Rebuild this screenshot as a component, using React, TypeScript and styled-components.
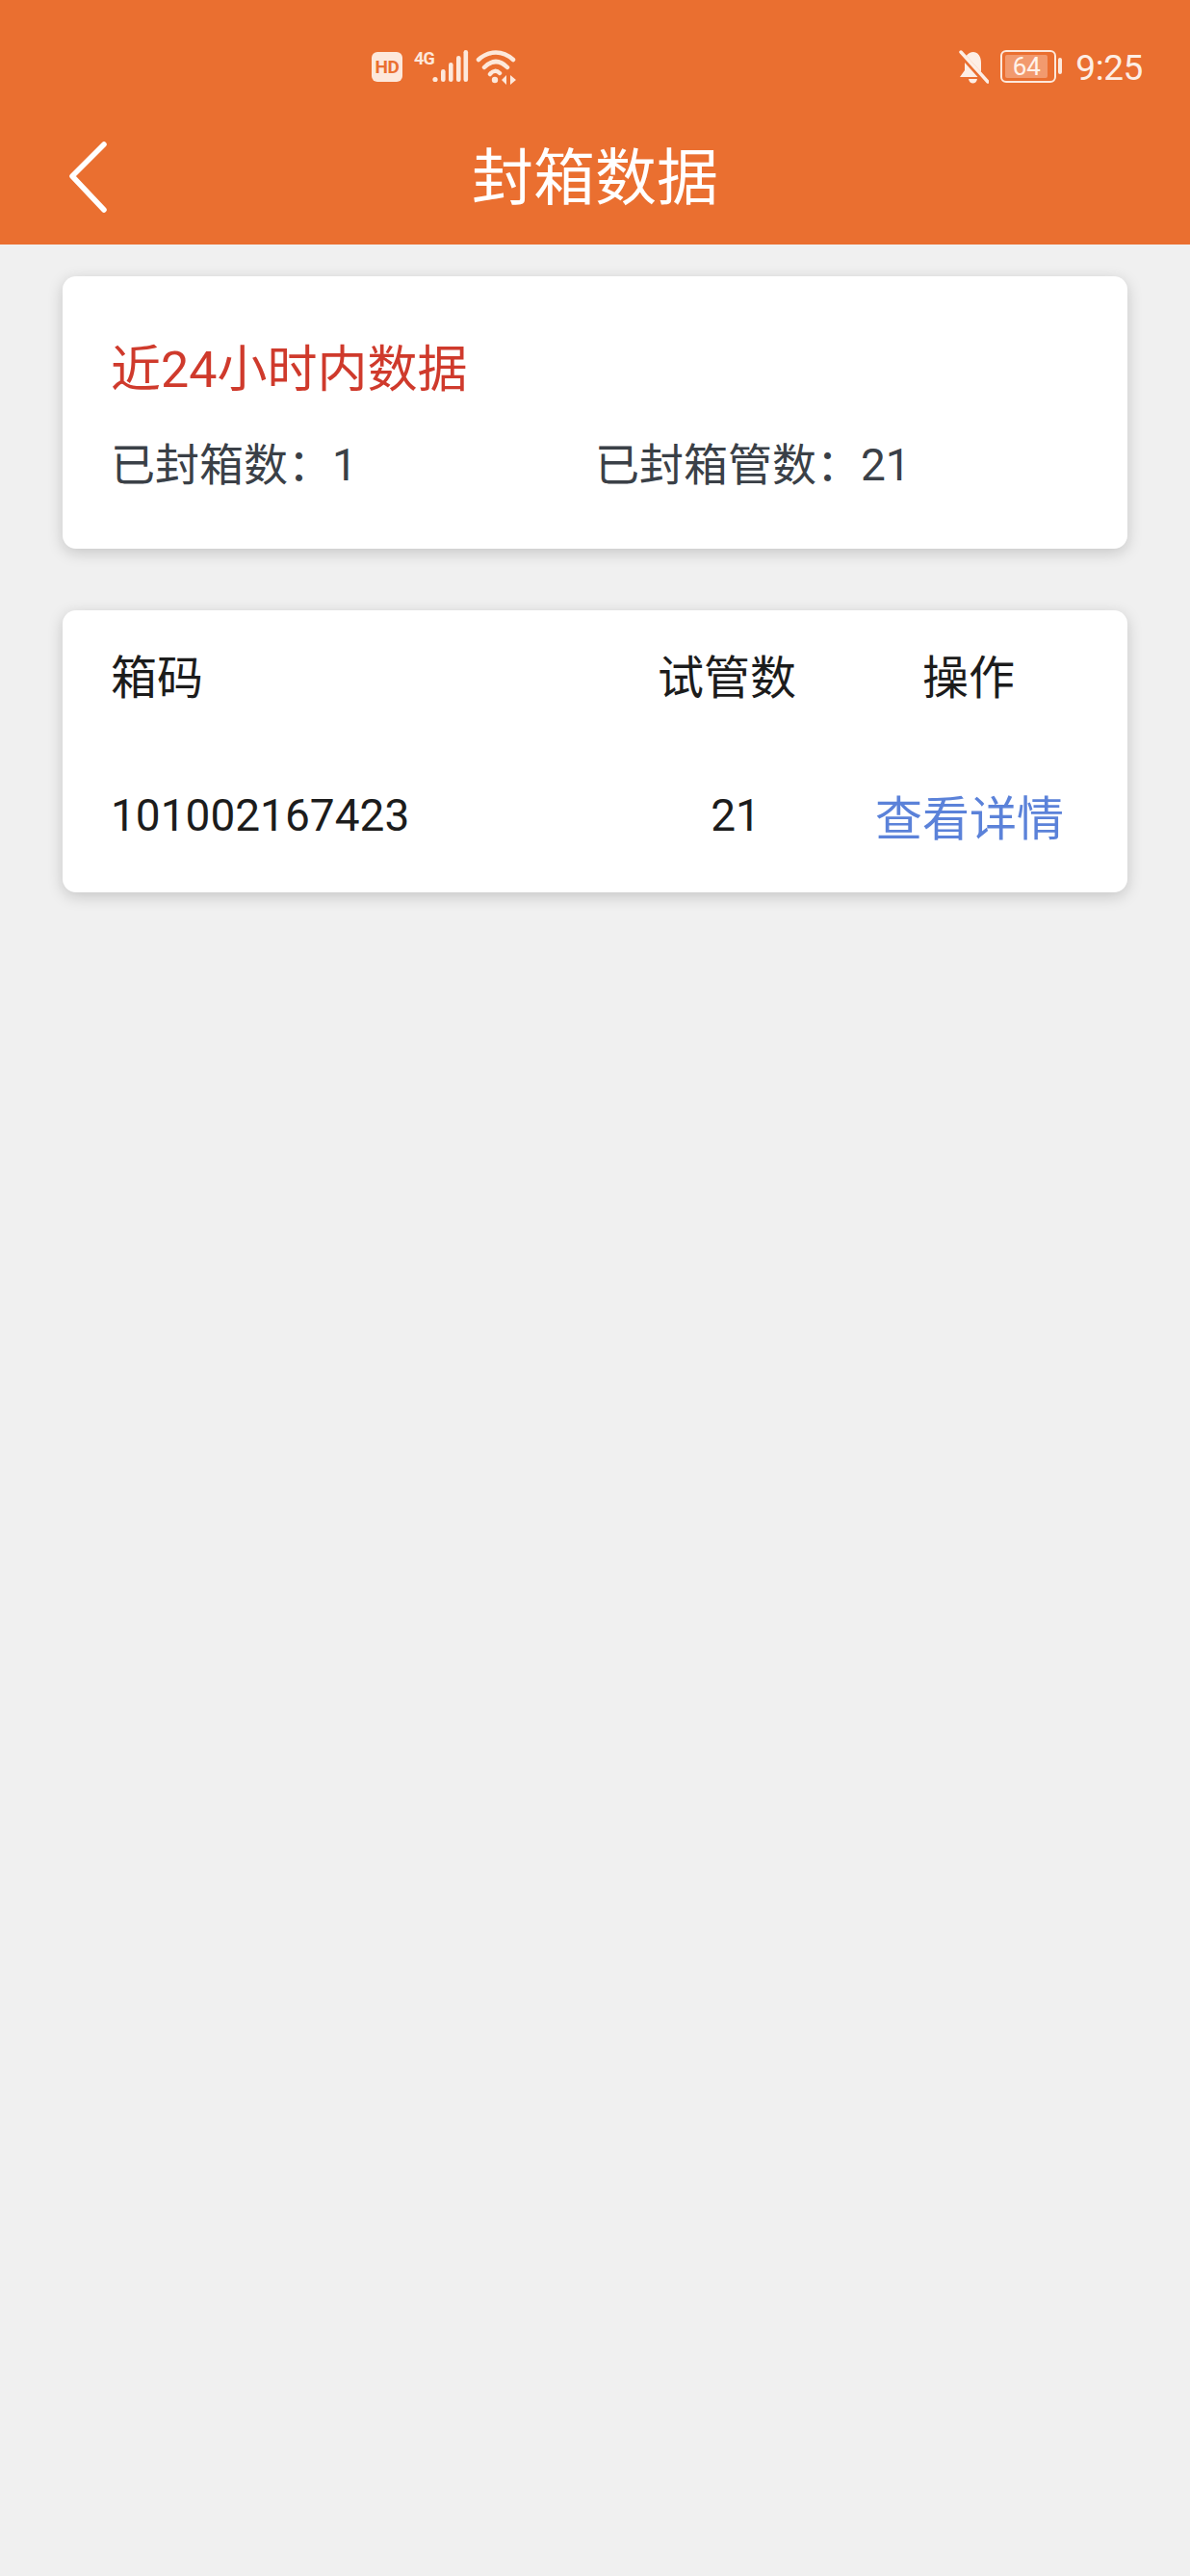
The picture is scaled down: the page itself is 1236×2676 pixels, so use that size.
import React from 'react'
import styled, { createGlobalStyle } from 'styled-components'

const GlobalStyle = createGlobalStyle`
  html, body {
    margin: 0;
    padding: 0;
    background: #f0f0f0;
  }
  * {
    box-sizing: border-box;
  }
`

const Page = styled.div`
  width: 1236px;
  height: 2676px;
  overflow: hidden;
  background: #f0f0f0;
  font-family: Roboto, "Noto Sans CJK SC", sans-serif;
`

const Header = styled.header`
  height: 254px;
  background: #ea6f30;
  color: #fff;
`

const StatusBar = styled.div`
  height: 116px;
  padding: 52px 49px 0 386px;
  display: flex;
  align-items: flex-start;
  justify-content: space-between;
  color: #fde8db;
`

const StatusGroup = styled.div`
  display: flex;
  align-items: flex-start;
`

const HdBadge = styled.div`
  width: 32px;
  height: 31px;
  margin-top: 2px;
  border-radius: 6px;
  background: #fde8db;
  color: #ea6f30;
  font-size: 19px;
  font-weight: 700;
  line-height: 31px;
  text-align: center;
  letter-spacing: -0.5px;
`

const NetworkLabel = styled.div`
  width: 19px;
  margin-left: 12px;
  font-size: 18px;
  font-weight: 700;
  line-height: 18px;
  letter-spacing: -0.8px;
`

const Battery = styled.div`
  width: 58px;
  height: 34px;
  margin-left: 12px;
  padding: 3px;
  border: 2px solid #fde8db;
  border-radius: 6px;
`

const BatteryFill = styled.div`
  width: 44px;
  height: 24px;
  background: #f29a6e;
  border-radius: 2px;
  font-size: 26px;
  line-height: 24px;
  text-align: center;
  color: #fff3ea;
`

const BatteryNub = styled.div`
  width: 4px;
  height: 17px;
  margin: 8px 0 0 2px;
  border-radius: 2px;
  background: #fde8db;
`

const Clock = styled.div`
  margin-left: 14px;
  font-size: 37px;
  line-height: 38px;
  letter-spacing: -0.4px;
  color: #fdeee5;
`

const Toolbar = styled.div`
  height: 138px;
  padding-left: 72px;
  display: flex;
  align-items: center;
  position: relative;
`

const BackIcon = styled.svg`
  width: 40px;
  height: 74px;
  margin-top: -2px;
`

const Title = styled.h1`
  position: absolute;
  left: 0;
  right: 0;
  top: 26px;
  margin: 0;
  font-size: 64px;
  font-weight: 400;
  line-height: 88px;
  text-align: center;
  color: #fff;
`

const Content = styled.main`
  padding: 33px 65px 0;
  display: flex;
  flex-direction: column;
  gap: 64px;
`

const Card = styled.section`
  background: #fff;
  border-radius: 14px;
  box-shadow: 0 4px 16px rgba(0, 0, 0, 0.18);
`

const SummaryCard = styled(Card)`
  height: 283px;
  padding: 67px 50px 0;
`

const SummaryTitle = styled.h2`
  margin: 0;
  font-size: 52px;
  font-weight: 400;
  line-height: 62px;
  color: #cf3a2c;
`

const SummaryRow = styled.div`
  margin-top: 37px;
  display: grid;
  grid-template-columns: 503px 1fr;
  font-size: 46px;
  line-height: 60px;
  color: #3a4047;
`

const TableRow = styled.div<{ $height: number }>`
  height: ${({ $height }) => $height}px;
  padding: 0 19px 0 50px;
  display: grid;
  grid-template-columns: 535px 212px 290px;
  align-items: center;
  font-size: 48px;
  color: #1c1c1c;
`

const CenterCell = styled.div`
  padding-right: 2px;
  text-align: center;
`

const CodeCell = styled.div`
  font-size: 46px;
`

const CountCell = styled.div`
  padding-left: 16px;
  font-size: 46px;
  text-align: center;
`

const DetailLink = styled.a`
  text-align: center;
  color: #5b82d9;
  font-size: 49px;
`

const App = () => (
  <Page>
    <GlobalStyle />
    <Header>
      <StatusBar>
        <StatusGroup>
          <HdBadge>HD</HdBadge>
          <NetworkLabel>4G</NetworkLabel>
          <svg width="38" height="36" viewBox="0 0 38 36" fill="#fde8db">
            <circle cx="3" cy="30.5" r="2.6" />
            <rect x="9" y="20" width="4.6" height="13" rx="2.3" />
            <rect x="17" y="13" width="4.6" height="20" rx="2.3" />
            <rect x="25" y="6" width="4.6" height="27" rx="2.3" />
            <rect x="32.5" y="0" width="4.6" height="33" rx="2.3" />
          </svg>
          <svg width="44" height="36" viewBox="0 0 44 36" fill="none" stroke="#fde8db" strokeWidth="4.5" strokeLinecap="round" style={{ marginLeft: 7 }}>
            <path d="M3 10 C14 0 28 0 39 10" />
            <path d="M9 18 C17 10 25 10 33 18" />
            <path d="M15 25 C18 21 22 21 25 24" />
            <circle cx="20" cy="31" r="3.2" fill="#fde8db" stroke="none" />
            <path d="M32 26 L27 31 L32 36 Z M36 26 L42 31 L36 36 Z" fill="#fde8db" stroke="none" />
          </svg>
        </StatusGroup>
        <StatusGroup>
          <svg width="32" height="36" viewBox="0 0 32 36">
            <path d="M16 2 C10 2 7 7 7 13 L7 21 L2 28 L27 28 L24 23 L24 13 C24 7 21 2 16 2 Z" fill="#fdeee5" />
            <path d="M11 30 C12 36 19 36 20 30 Z" fill="#fdeee5" />
            <path d="M2 3 L30 34" stroke="#ea6f30" strokeWidth="6" />
            <path d="M3 2 L31 33" stroke="#fdeee5" strokeWidth="3.5" strokeLinecap="round" />
          </svg>
          <Battery>
            <BatteryFill>64</BatteryFill>
          </Battery>
          <BatteryNub />
          <Clock>9:25</Clock>
        </StatusGroup>
      </StatusBar>
      <Toolbar>
        <BackIcon viewBox="0 0 40 74" fill="none" stroke="#fff" strokeWidth="5.5" strokeLinecap="round" strokeLinejoin="round">
          <path d="M36 3 L3 36 L36 71" />
        </BackIcon>
        <Title>封箱数据</Title>
      </Toolbar>
    </Header>
    <Content>
      <SummaryCard>
        <SummaryTitle>近24小时内数据</SummaryTitle>
        <SummaryRow>
          <div>已封箱数：1</div>
          <div>已封箱管数：21</div>
        </SummaryRow>
      </SummaryCard>
      <Card>
        <TableRow $height={132}>
          <div>箱码</div>
          <CenterCell>试管数</CenterCell>
          <CenterCell>操作</CenterCell>
        </TableRow>
        <TableRow $height={161}>
          <CodeCell>101002167423</CodeCell>
          <CountCell>21</CountCell>
          <DetailLink>查看详情</DetailLink>
        </TableRow>
      </Card>
    </Content>
  </Page>
)

export default App
